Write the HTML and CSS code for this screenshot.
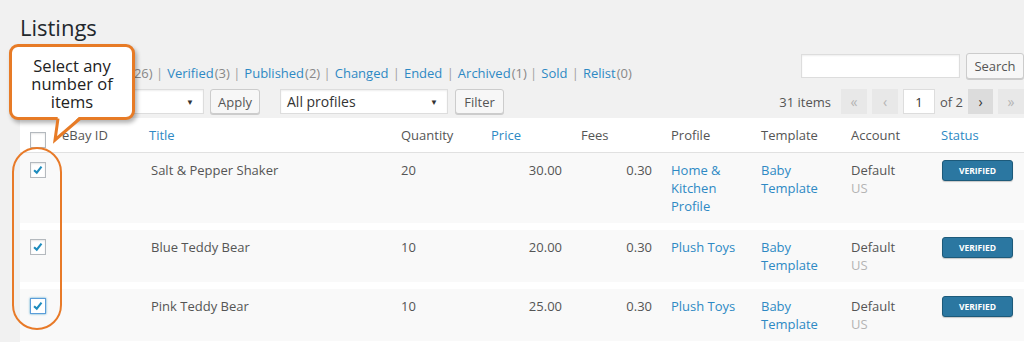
FILE: index.html
```html
<!DOCTYPE html>
<html lang="en">

<head>
    <meta charset="UTF-8">
    <title>Listings</title>
    <link rel="stylesheet" href="styles.css">
</head>

<body>
    <div class="wrap">
        <h1>Listings</h1>

        <div class="top">
            <ul class="subsubsub">
                <li><a>All<span class="count">(31)</span></a> |</li>
                <li><a>Prepared<span class="count">(26)</span></a> |</li>
                <li><a>Verified<span class="count">(3)</span></a> |</li>
                <li><a>Published<span class="count">(2)</span></a> |</li>
                <li><a>Changed</a> |</li>
                <li><a>Ended</a> |</li>
                <li><a>Archived<span class="count">(1)</span></a> |</li>
                <li><a>Sold</a> |</li>
                <li><a>Relist<span class="count">(0)</span></a></li>
            </ul>
            <div class="search-box">
                <input type="text" class="search-input">
                <button class="button search-btn">Search</button>
            </div>
        </div>

        <div class="tablenav">
            <div class="actions">
                <div class="select bulk"><span></span><i>&#9660;</i></div>
                <button class="button apply">Apply</button>
                <div class="select profiles"><span>All profiles</span><i>&#9660;</i></div>
                <button class="button filter">Filter</button>
            </div>
            <div class="pages">
                <span class="num">31 items</span>
                <span class="pg off">&laquo;</span>
                <span class="pg off">&lsaquo;</span>
                <span class="pg-input">1</span>
                <span class="of">of 2</span>
                <span class="pg on">&rsaquo;</span>
                <span class="pg off">&raquo;</span>
            </div>
        </div>

        <table class="listings">
            <colgroup>
                <col style="width:34px">
                <col style="width:87px">
                <col style="width:252px">
                <col style="width:90px">
                <col style="width:90px">
                <col style="width:90px">
                <col style="width:90px">
                <col style="width:90px">
                <col style="width:90px">
                <col style="width:91px">
            </colgroup>
            <thead>
                <tr>
                    <th class="check"><span class="cb"></span></th>
                    <th>eBay ID</th>
                    <th class="sort">Title</th>
                    <th>Quantity</th>
                    <th class="sort">Price</th>
                    <th>Fees</th>
                    <th>Profile</th>
                    <th>Template</th>
                    <th>Account</th>
                    <th class="sort">Status</th>
                </tr>
            </thead>
            <tbody>
                <tr>
                    <td class="check"><span class="cb checked"><svg viewBox="0 0 16 16"><path d="M3.5 8.2 L6.6 11 L12 4.2" /></svg></span></td>
                    <td></td>
                    <td class="title">Salt &amp; Pepper Shaker</td>
                    <td>20</td>
                    <td class="num-cell">30.00</td>
                    <td class="num-cell">0.30</td>
                    <td><a>Home &amp; Kitchen Profile</a></td>
                    <td><a>Baby Template</a></td>
                    <td>Default<br><span class="muted">US</span></td>
                    <td><span class="badge">VERIFIED</span></td>
                </tr>
                <tr>
                    <td class="check"><span class="cb checked"><svg viewBox="0 0 16 16"><path d="M3.5 8.2 L6.6 11 L12 4.2" /></svg></span></td>
                    <td></td>
                    <td class="title">Blue Teddy Bear</td>
                    <td>10</td>
                    <td class="num-cell">20.00</td>
                    <td class="num-cell">0.30</td>
                    <td><a>Plush Toys</a></td>
                    <td><a>Baby Template</a></td>
                    <td>Default<br><span class="muted">US</span></td>
                    <td><span class="badge">VERIFIED</span></td>
                </tr>
                <tr>
                    <td class="check"><span class="cb checked focus"><svg viewBox="0 0 16 16"><path d="M3.5 8.2 L6.6 11 L12 4.2" /></svg></span></td>
                    <td></td>
                    <td class="title">Pink Teddy Bear</td>
                    <td>10</td>
                    <td class="num-cell">25.00</td>
                    <td class="num-cell">0.30</td>
                    <td><a>Plush Toys</a></td>
                    <td><a>Baby Template</a></td>
                    <td>Default<br><span class="muted">US</span></td>
                    <td><span class="badge">VERIFIED</span></td>
                </tr>
            </tbody>
        </table>

        <!-- annotation overlay -->
        <div class="ring"></div>
        <div class="callout">
            Select any<br>number of<br>items
            <svg class="tail" width="40" height="30" viewBox="0 0 40 30">
                <polygon points="13,1 36,1 10,26" fill="#fff" />
                <path d="M13 4.5 L10 26 L35 4.5" fill="none" stroke="#e77b26" stroke-width="3" />
            </svg>
        </div>
    </div>
</body>

</html>
```

FILE: styles.css
```css
* {
    box-sizing: border-box;
}

body {
    margin: 0;
    background: #f1f1f1;
    font-family: "Open Sans", sans-serif;
    font-size: 13px;
    color: #444;
    overflow: hidden;
}

a {
    color: #2e89c4;
}

.wrap {
    position: relative;
    padding-left: 20px;
    height: 342px;
}

h1 {
    margin: 0;
    padding: 13px 0 0;
    font-size: 22px;
    line-height: 29px;
    font-weight: 400;
    color: #23282d;
}

/* status links + search */

.top {
    display: flex;
    justify-content: space-between;
    align-items: flex-start;
    padding-top: 12px;
    height: 47px;
}

.subsubsub {
    display: flex;
    margin: 10px 0 0;
    padding: 0;
    list-style: none;
    line-height: 18px;
    color: #a0a0a0;
}

.subsubsub li {
    margin-right: 4px;
    white-space: nowrap;
}

.subsubsub a {
    padding-right: 1px;
}

.subsubsub .count {
    color: #888;
    margin-left: 1px;
    margin-right: -1px;
}

.search-box {
    display: flex;
    align-items: center;
    gap: 6px;
    margin-top: -1px;
}

.search-input {
    width: 159px;
    height: 24px;
    border: 1px solid #ddd;
    background: #fff;
    box-shadow: inset 0 1px 2px rgba(0, 0, 0, .07);
    margin: 0;
}

.button {
    height: 25px;
    padding: 0;
    border: 1px solid #ccc;
    border-radius: 3px;
    background: #f7f7f7;
    box-shadow: 0 1px 0 #ccc;
    font-family: "Open Sans", sans-serif;
    font-size: 13px;
    color: #555;
}

.search-btn {
    width: 58px;
    height: 26px;
}

/* tablenav */

.tablenav {
    display: flex;
    justify-content: space-between;
    height: 25px;
    margin-bottom: 4px;
}

.actions {
    display: flex;
    align-items: center;
    gap: 6px;
}

.select {
    display: flex;
    justify-content: space-between;
    align-items: center;
    height: 25px;
    padding: 0 9px 0 6px;
    background: #fff;
    border: 1px solid #ddd;
    box-shadow: inset 0 1px 2px rgba(0, 0, 0, .07);
    font-size: 14px;
    color: #333;
}

.select i {
    font-style: normal;
    font-size: 8px;
    color: #333;
}

.bulk {
    width: 184px;
}

.apply {
    width: 50px;
}

.profiles {
    width: 168px;
    margin-left: 14px;
}

.filter {
    width: 49px;
    margin-left: 1px;
}

.pages {
    display: flex;
    align-items: center;
    gap: 5px;
}

.pages .num {
    margin-right: 5px;
    color: #555;
}

.pg {
    display: flex;
    align-items: center;
    justify-content: center;
    width: 26px;
    height: 25px;
    font-size: 14px;
}

.pg.off {
    background: #e8e8e8;
    color: #b4b4b4;
}

.pg.on {
    width: 25px;
    background: #dcdcdc;
    color: #333;
}

.pg-input {
    display: flex;
    align-items: center;
    justify-content: center;
    width: 32px;
    height: 25px;
    background: #fff;
    border: 1px solid #ddd;
    color: #333;
}

.of {
    color: #555;
}

/* table */

.listings {
    width: 1004px;
    table-layout: fixed;
    border-collapse: separate;
    border-spacing: 0;
    background: #fff;
}

.listings th {
    padding: 8px;
    line-height: 18px;
    text-align: left;
    font-weight: 400;
    color: #555;
    border-bottom: 1px solid #e1e1e1;
}

.listings th.sort {
    color: #2e89c4;
}

.listings td {
    padding: 8px;
    line-height: 18px;
    vertical-align: top;
    color: #555;
    background: #f9f9f9;
    border-bottom: 7px solid #fff;
}

.listings td.title {
    padding-left: 10px;
}

.listings td a {
    text-decoration: none;
}

.listings th.check,
.listings td.check {
    padding: 9px 0 0 10px;
}

.listings td.num-cell {
    text-align: right;
    padding-right: 11px;
}

.muted {
    color: #b4b4b4;
}

.cb {
    display: block;
    width: 16px;
    height: 16px;
    border: 1px solid #b4b9be;
    background: #fff;
    box-shadow: inset 0 1px 2px rgba(0, 0, 0, .1);
}

.cb svg {
    display: block;
    width: 14px;
    height: 14px;
}

.cb path {
    fill: none;
    stroke: #1e8cbe;
    stroke-width: 2.4;
}

.cb.focus {
    border-color: #5b9dd9;
    box-shadow: 0 0 2px rgba(30, 140, 190, .8);
}

.badge {
    display: block;
    width: 71px;
    height: 21px;
    margin-top: -1px;
    margin-left: 1px;
    border: 1px solid #1d5a7a;
    border-radius: 3px;
    background: #2b77a1;
    box-shadow: 0 1px 1px rgba(0, 0, 0, .2);
    color: #fff;
    font-size: 8.5px;
    font-weight: 700;
    line-height: 19px;
    text-align: center;
}

/* annotation */

.ring {
    position: absolute;
    left: 12px;
    top: 147px;
    width: 50px;
    height: 183px;
    border: 2px solid #e87a28;
    border-radius: 25px;
}

.callout {
    position: absolute;
    left: 9px;
    top: 44px;
    width: 126px;
    height: 76px;
    padding-top: 10px;
    border: 3px solid #e77b26;
    border-radius: 9px;
    background: #fff;
    box-shadow: 2px 3px 4px rgba(0, 0, 0, .3);
    text-align: center;
    font-size: 16.5px;
    line-height: 18px;
    color: #222;
}

.tail {
    position: absolute;
    left: 33px;
    top: 67px;
}
```
